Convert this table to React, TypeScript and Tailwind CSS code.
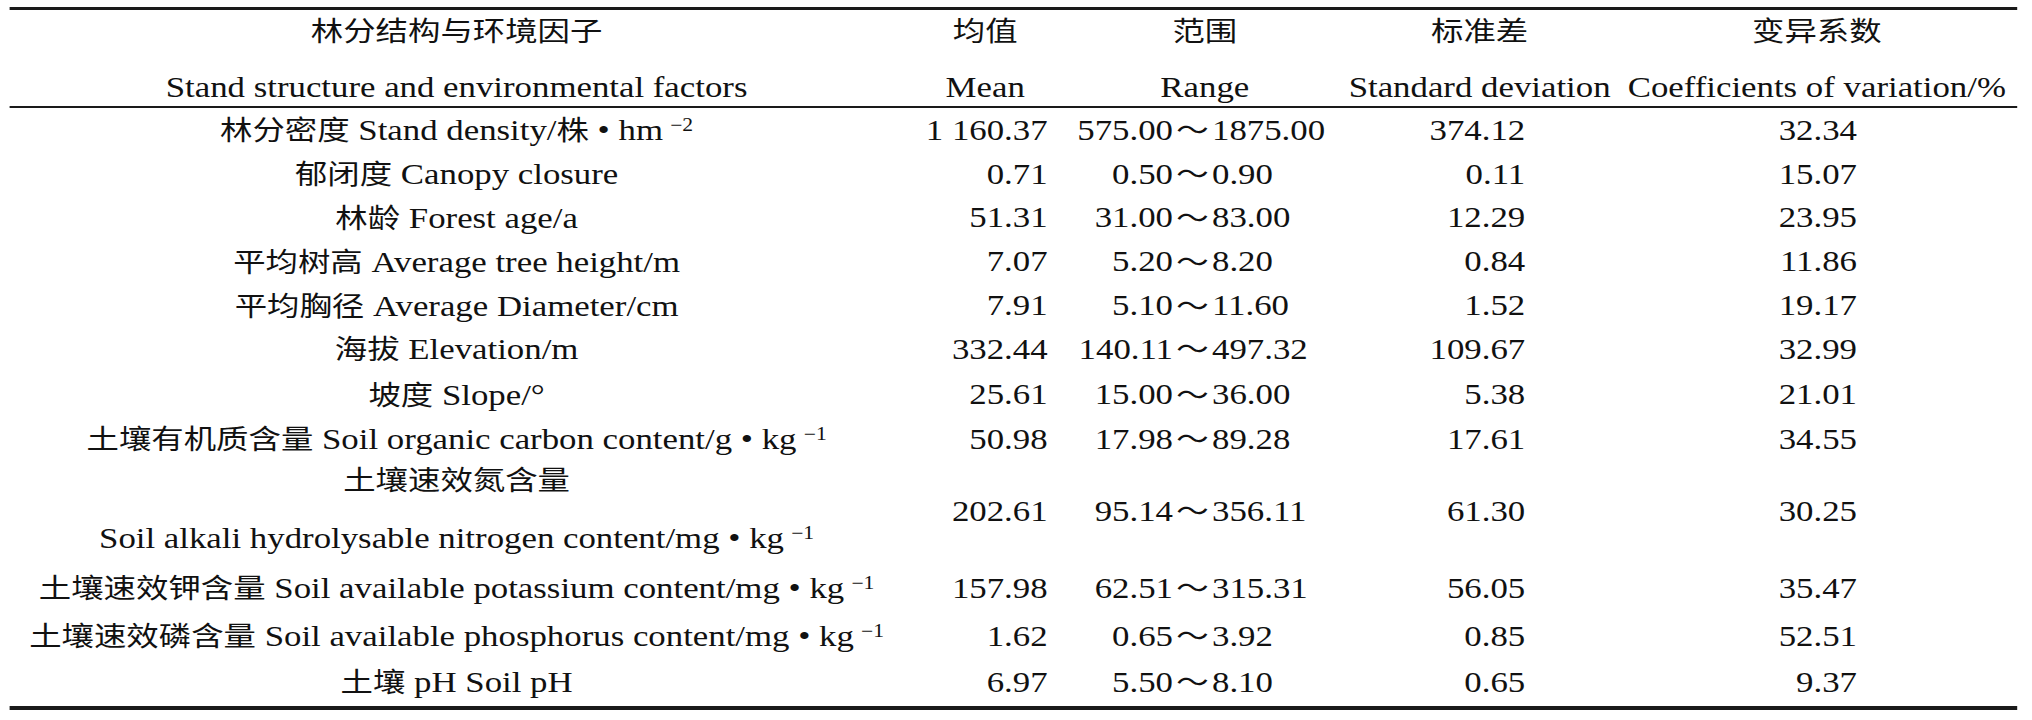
import React from 'react';

// CJK runs get a slightly smaller size so their advance matches the print
const CJK = /([\u3000-\u9fff\uff00-\uffef]+)/;

const T: React.FC<{ s: string }> = ({ s }) => (
  <span>
    {s.split(CJK).map((part, i) =>
      CJK.test(part) ? (
        <span key={i} className="text-[27px] font-['Noto_Sans_CJK_SC',sans-serif]">
          {part}
        </span>
      ) : (
        <React.Fragment key={i}>{part}</React.Fragment>
      )
    )}
  </span>
);

interface Row {
  label: string;
  sup?: string;
  mean: string;
  lo: string;
  hi: string;
  sd: string;
  cv: string;
  h: string;
}

const rows: Row[] = [
  { label: '林分密度 Stand density/株 • hm', sup: '−2', mean: '1 160.37', lo: '575.00', hi: '1875.00', sd: '374.12', cv: '32.34', h: 'h-[44px]' },
  { label: '郁闭度 Canopy closure', mean: '0.71', lo: '0.50', hi: '0.90', sd: '0.11', cv: '15.07', h: 'h-[44px]' },
  { label: '林龄 Forest age/a', mean: '51.31', lo: '31.00', hi: '83.00', sd: '12.29', cv: '23.95', h: 'h-[43px]' },
  { label: '平均树高 Average tree height/m', mean: '7.07', lo: '5.20', hi: '8.20', sd: '0.84', cv: '11.86', h: 'h-[45px]' },
  { label: '平均胸径 Average Diameter/cm', mean: '7.91', lo: '5.10', hi: '11.60', sd: '1.52', cv: '19.17', h: 'h-[43px]' },
  { label: '海拔 Elevation/m', mean: '332.44', lo: '140.11', hi: '497.32', sd: '109.67', cv: '32.99', h: 'h-[44px]' },
  { label: '坡度 Slope/°', mean: '25.61', lo: '15.00', hi: '36.00', sd: '5.38', cv: '21.01', h: 'h-[47px]' },
  { label: '土壤有机质含量 Soil organic carbon content/g • kg', sup: '−1', mean: '50.98', lo: '17.98', hi: '89.28', sd: '17.61', cv: '34.55', h: 'h-[42px]' },
];

const rowsAfter: Row[] = [
  { label: '土壤速效钾含量 Soil available potassium content/mg • kg', sup: '−1', mean: '157.98', lo: '62.51', hi: '315.31', sd: '56.05', cv: '35.47', h: 'h-[52px]' },
  { label: '土壤速效磷含量 Soil available phosphorus content/mg • kg', sup: '−1', mean: '1.62', lo: '0.65', hi: '3.92', sd: '0.85', cv: '52.51', h: 'h-[44px]' },
  { label: '土壤 pH Soil pH', mean: '6.97', lo: '5.50', hi: '8.10', sd: '0.65', cv: '9.37', h: 'h-[48px]' },
];

const GRID = 'grid grid-cols-[745px_136px_230px_228px_334px]';

const Sup: React.FC<{ s?: string }> = ({ s }) =>
  s ? <sup className="text-[18px] ml-[6px]">{s}</sup> : null;

const Values: React.FC<{ r: Row }> = ({ r }) => (
  <>
    <div className="flex items-center justify-end pr-[16px]">{r.mean}</div>
    <div className="flex items-center">
      <span className="w-[88.5px] text-right">{r.lo}</span>
      <span className="w-[32.5px] text-center">
        <T s="～" />
      </span>
      <span>{r.hi}</span>
    </div>
    <div className="flex items-center justify-end pr-[76px]">{r.sd}</div>
    <div className="flex items-center justify-end pr-[133.5px]">{r.cv}</div>
  </>
);

const DataRow: React.FC<{ r: Row }> = ({ r }) => (
  <div className={`${GRID} ${r.h}`}>
    <div className="flex items-center justify-center whitespace-nowrap">
      <span>
        <T s={r.label} />
        <Sup s={r.sup} />
      </span>
    </div>
    <Values r={r} />
  </div>
);

const HeadCell: React.FC<{ cn: string; en: string }> = ({ cn, en }) => (
  <div className="flex flex-col items-center whitespace-nowrap">
    <div className="h-[42px] flex items-center">
      <T s={cn} />
    </div>
    <div className="h-[42px] mt-[14px] flex items-center">{en}</div>
  </div>
);

export default function App() {
  const nitrogen: Row = {
    label: '',
    mean: '202.61',
    lo: '95.14',
    hi: '356.11',
    sd: '61.30',
    cv: '30.25',
    h: 'h-[102px]',
  };

  return (
    <div className="w-[2032px] h-[720px] bg-white overflow-hidden text-[#111] text-[29px] leading-none font-['Liberation_Serif',serif]">
      {/* printed table is stretched ~1.2x horizontally */}
      <div className="w-[1693px] origin-top-left scale-x-[1.2] pt-[7px] pl-[8px] font-[family-name:'Liberation_Serif',serif]">
        <div className="w-[1673px] border-t-[3px] border-b-[4px] border-[#1a1a1a]">
          {/* Header */}
          <div className={`${GRID} h-[98px] border-b-2 border-[#1a1a1a]`}>
            <HeadCell cn="林分结构与环境因子" en="Stand structure and environmental factors" />
            <HeadCell cn="均值" en="Mean" />
            <HeadCell cn="范围" en="Range" />
            <HeadCell cn="标准差" en="Standard deviation" />
            <HeadCell cn="变异系数" en="Coefficients of variation/%" />
          </div>

          {/* Body */}
          {rows.map((r) => (
            <DataRow key={r.label} r={r} />
          ))}

          <div className={`${GRID} ${nitrogen.h}`}>
            <div className="flex flex-col items-center justify-between pb-[4px] whitespace-nowrap">
              <div className="h-[40px] flex items-center">
                <T s="土壤速效氮含量" />
              </div>
              <div className="h-[40px] flex items-center">
                <span>
                  Soil alkali hydrolysable nitrogen content/mg • kg
                  <Sup s="−1" />
                </span>
              </div>
            </div>
            <Values r={nitrogen} />
          </div>

          {rowsAfter.map((r) => (
            <DataRow key={r.label} r={r} />
          ))}
        </div>
      </div>
    </div>
  );
}
